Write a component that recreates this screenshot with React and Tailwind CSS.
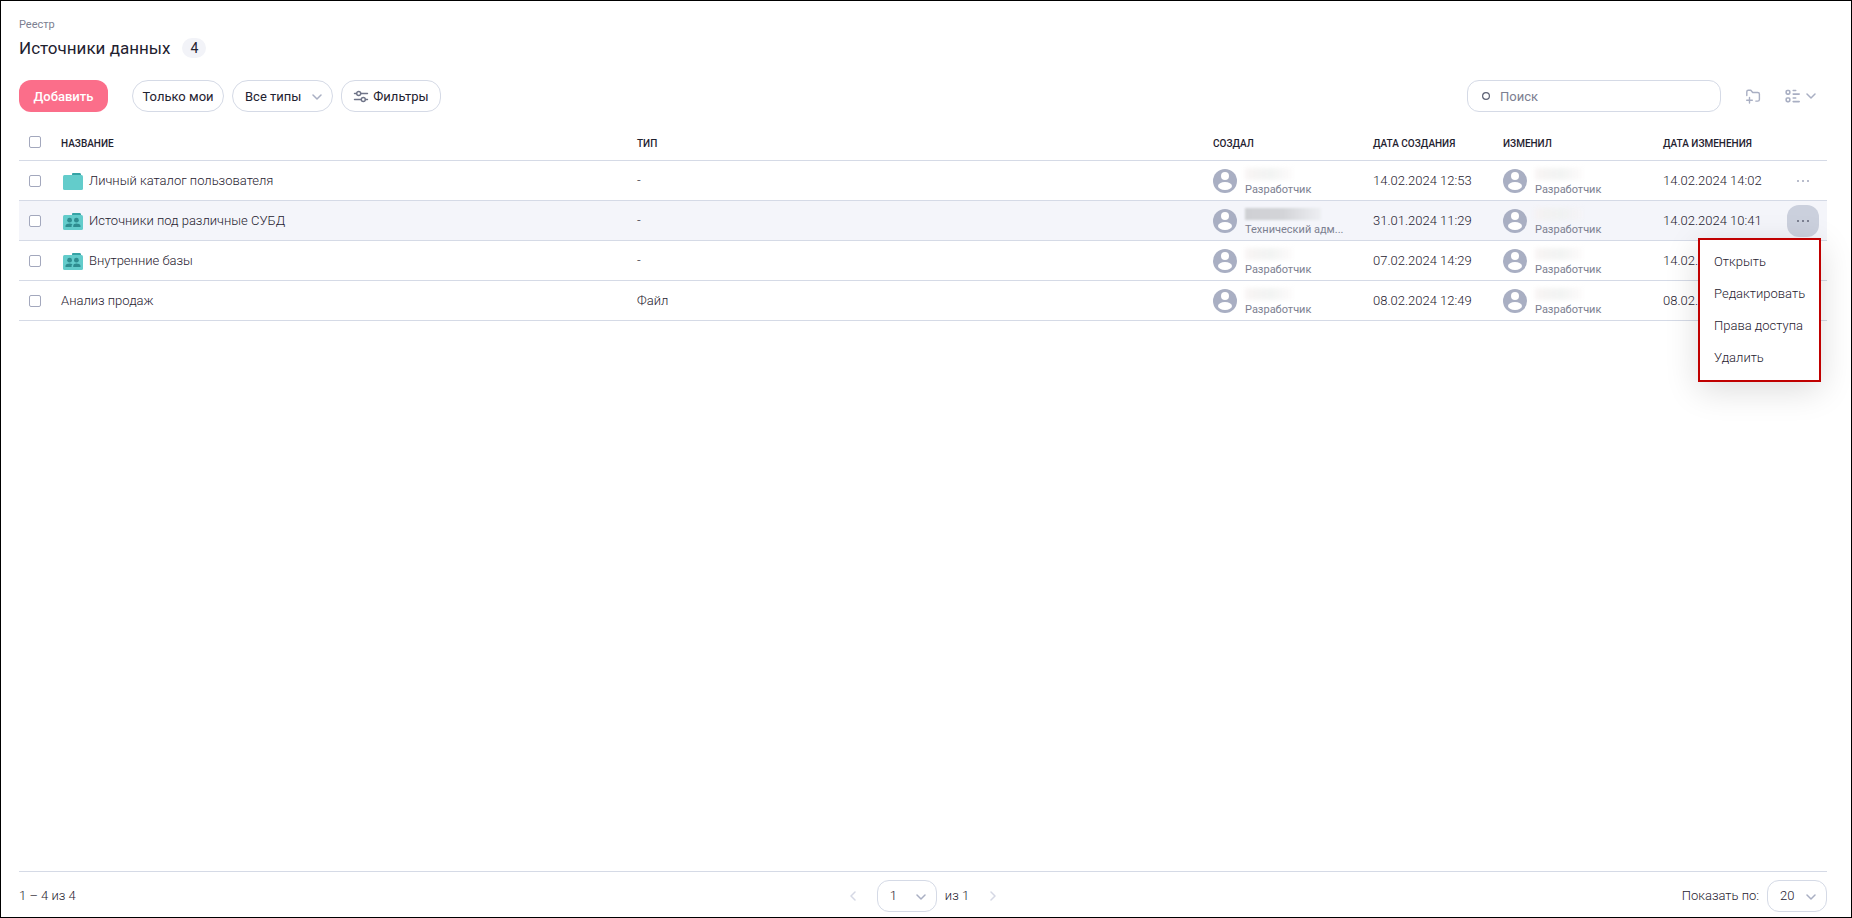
import React, { useState } from "react";

const initialSources = [
  {
    id: 1,
    name: "Личный каталог пользователя",
    kind: "folder",
    type: "-",
    createdBy: "Разработчик",
    createdAt: "14.02.2024 12:53",
    updatedBy: "Разработчик",
    updatedAt: "14.02.2024 14:02",
  },
  {
    id: 2,
    name: "Источники под различные СУБД",
    kind: "shared",
    type: "-",
    createdBy: "Технический адм...",
    darkName: true,
    createdAt: "31.01.2024 11:29",
    updatedBy: "Разработчик",
    updatedAt: "14.02.2024 10:41",
  },
  {
    id: 3,
    name: "Внутренние базы",
    kind: "shared",
    type: "-",
    createdBy: "Разработчик",
    createdAt: "07.02.2024 14:29",
    updatedBy: "Разработчик",
    updatedAt: "14.02.2024 10:40",
  },
  {
    id: 4,
    name: "Анализ продаж",
    kind: "source",
    type: "Файл",
    createdBy: "Разработчик",
    createdAt: "08.02.2024 12:49",
    updatedBy: "Разработчик",
    updatedAt: "08.02.2024 12:49",
  },
];

const menuItems = ["Открыть", "Редактировать", "Права доступа", "Удалить"];

const Chevron = ({ className }) => (
  <svg
    viewBox="0 0 10 6"
    className={className}
    fill="none"
    stroke="currentColor"
    strokeWidth="1.5"
    strokeLinecap="round"
    strokeLinejoin="round"
  >
    <path d="M1 1l4 4 4-4" />
  </svg>
);

const FolderIcon = ({ shared }) => (
  <svg width="20" height="17" viewBox="0 0 20 17" className="shrink-0">
    <path d="M9 2.5V1.2C9 .5 9.500 0 10.200 0h6.300c.8 0 1.500.6 1.500 1.400V3H9z" fill="#35a3a5" />
    <rect y="2" width="20" height="15" rx="1.5" fill="#63cccb" />
    {shared && (
      <g fill="#2f8d90">
        <circle cx="6.6" cy="7.2" r="2.4" />
        <circle cx="13.4" cy="7.2" r="2.4" />
        <path d="M2.500 14v-1.200c0-1.400 2.400-2.200 4.100-2.200 1 0 2.100.2 2.900.7-.8.5-.9 1-.9 1.700v1z" />
        <path d="M10.200 14v-1c0-1.600 1.600-2.400 3.200-2.400 1.700 0 4.100.8 4.100 2.200V14z" />
      </g>
    )}
  </svg>
);

const Avatar = () => (
  <svg width="24" height="24" viewBox="0 0 24 24" className="shrink-0">
    <circle cx="12" cy="12" r="12" fill="#a9afc3" />
    <circle cx="12" cy="7" r="4" fill="#fff" />
    <ellipse cx="12" cy="17" rx="7" ry="4" fill="#fff" />
  </svg>
);

const Dots = () => (
  <svg width="12" height="2" viewBox="0 0 12 2" fill="currentColor">
    <rect width="2" height="2" />
    <rect x="5" width="2" height="2" />
    <rect x="10" width="2" height="2" />
  </svg>
);

const Person = ({ role, dark }) => (
  <div className="flex items-center gap-2">
    <Avatar />
    <div className="whitespace-nowrap">
      {/* hidden user name */}
      {dark ? (
        <div className="mb-0.5 mt-1 h-3 w-[76px] bg-linear-to-r from-[#cfd0d4] via-[#d3d4d8] to-[#eeeff3] blur-[1px]" />
      ) : (
        <div className="mb-0.5 mt-1 h-3 w-12 bg-linear-to-r from-[#f6f1f0]/70 via-[#eef0ef]/80 to-[#faf4f4]/30 blur-[2px]" />
      )}
      <div className="text-[11px] leading-4 text-[#7c8091]">{role}</div>
    </div>
  </div>
);

const Checkbox = ({ label, ...props }) => (
  <input
    type="checkbox"
    aria-label={label}
    className="ml-[10px] block size-3 appearance-none rounded-[2px] border border-[#a3a8bd] bg-white checked:bg-[#a3a8bd]"
    {...props}
  />
);

const App = () => {
  const [search, setSearch] = useState("");
  const [selected, setSelected] = useState([]);
  const [openMenu, setOpenMenu] = useState(2);

  const sources = initialSources.filter((s) =>
    s.name.toLowerCase().includes(search.toLowerCase())
  );

  const toggleRow = (id) => {
    setSelected((prev) =>
      prev.includes(id) ? prev.filter((x) => x !== id) : [...prev, id]
    );
  };

  const toggleAll = () => {
    setSelected(selected.length === sources.length ? [] : sources.map((s) => s.id));
  };

  return (
    <div className="flex min-h-screen flex-col border border-black bg-white pl-[18px] pr-6 font-['Roboto',sans-serif] text-[13px] text-[#1f2230]">
      {/* Header */}
      <header className="pt-4">
        <a href="#" className="block w-fit text-[11px] leading-4 text-[#7c8091]">
          Реестр
        </a>
        <div className="mt-[3px] flex items-center gap-3">
          <h1 className="text-[17px] leading-6">Источники данных</h1>
          <span className="flex h-5 w-6 items-center justify-center rounded-full bg-[#f2f3f8] text-sm">
            4
          </span>
        </div>
      </header>

      {/* Toolbar */}
      <div className="mt-5 flex items-center gap-2">
        <button className="mr-4 h-8 w-[89px] rounded-xl bg-[#fb6e8a] pt-0.5 font-medium text-white">
          Добавить
        </button>
        <button className="h-8 w-[92px] rounded-full border border-[#d5dae6] pt-0.5">
          Только мои
        </button>
        <div className="relative">
          <select
            aria-label="Тип"
            className="block h-8 w-[101px] appearance-none rounded-full border border-[#d5dae6] bg-white pl-3 pt-0.5"
          >
            <option>Все типы</option>
          </select>
          <Chevron className="pointer-events-none absolute right-[11px] top-3.5 w-[10px] text-[#a9afc3]" />
        </div>
        <button className="flex h-8 w-[100px] items-center justify-center gap-1 rounded-[14px] border border-[#d5dae6] pt-0.5">
          <svg
            width="16"
            height="14"
            viewBox="0 0 16 14"
            fill="none"
            stroke="#6f7488"
            strokeWidth="1.4"
            strokeLinecap="round"
          >
            <path d="M1.500 3.500h2M8 3.500h6.500M1.500 9.500H8M12.500 9.500h2" />
            <circle cx="5.700" cy="3.500" r="2" />
            <circle cx="10.300" cy="9.500" r="2" />
          </svg>
          Фильтры
        </button>

        <label className="relative ml-auto">
          <svg
            width="8"
            height="8"
            viewBox="0 0 8 8"
            className="absolute left-[15px] top-3"
            fill="none"
            stroke="#5d6275"
            strokeWidth="1.2"
          >
            <circle cx="4" cy="4" r="3.4" />
          </svg>
          <input
            type="text"
            aria-label="Поиск"
            placeholder="Поиск"
            value={search}
            onChange={(e) => setSearch(e.target.value)}
            className="block h-8 w-[254px] rounded-xl border border-[#d5dae6] pl-8 pr-3 placeholder:text-[#7c8091]"
          />
        </label>
        <button
          aria-label="Новая папка"
          className="ml-2 flex size-8 items-center justify-center text-[#a9afc3]"
        >
          <svg
            width="16"
            height="16"
            viewBox="0 0 16 16"
            fill="none"
            stroke="currentColor"
            strokeWidth="1.4"
            strokeLinecap="round"
            strokeLinejoin="round"
          >
            <path d="M1.800 7.500V3.800c0-1 .6-1.600 1.500-1.600h2.500l1.900 2.300h5c1.100 0 1.700.6 1.700 1.600v5.400c0 1-.6 1.600-1.700 1.600h-1.900" />
            <path d="M4.500 9.500v5.500M1.700 12.300h5.600" />
          </svg>
        </button>
        <button
          aria-label="Вид"
          className="flex h-8 w-[50px] items-center gap-1.5 pl-2 text-[#a9afc3]"
        >
          <svg
            width="15"
            height="14"
            viewBox="0 0 15 14"
            fill="none"
            stroke="currentColor"
            strokeWidth="1.6"
            strokeLinecap="round"
          >
            <rect x="1.200" y="1.500" width="3.600" height="3.600" rx="1" />
            <rect x="1.200" y="9" width="3.600" height="3.600" rx="1" />
            <path d="M8.200 1.500h2.500M8.200 5.100h6M8.200 9h2.500M8.200 12.600h6" />
          </svg>
          <Chevron className="w-[10px]" />
        </button>
      </div>

      {/* Sources table */}
      <table className="mt-2 w-full table-fixed text-left">
        <colgroup>
          <col className="w-[42px]" />
          <col />
          <col />
          <col className="w-[160px]" />
          <col className="w-[130px]" />
          <col className="w-[160px]" />
          <col className="w-[120px]" />
          <col className="w-11" />
        </colgroup>
        <thead className="text-[10px] uppercase">
          <tr className="h-10 border-b border-[#d5dae6]">
            <th className="pt-1">
              <Checkbox
                label="Выбрать все"
                checked={sources.length > 0 && selected.length === sources.length}
                onChange={toggleAll}
              />
            </th>
            <th className="pt-2 font-medium">Название</th>
            <th className="pt-2 font-medium">Тип</th>
            <th className="pt-2 font-medium">Создал</th>
            <th className="pt-2 font-medium">Дата создания</th>
            <th className="pt-2 font-medium">Изменил</th>
            <th className="pt-2 font-medium">Дата изменения</th>
            <th></th>
          </tr>
        </thead>
        <tbody className="font-light">
          {sources.map((source) => (
            <tr
              key={source.id}
              className={`h-10 border-b border-[#d5dae6] ${
                openMenu === source.id ? "bg-[#f4f5fa]" : ""
              }`}
            >
              <td className="pt-0.5">
                <Checkbox
                  label={source.name}
                  checked={selected.includes(source.id)}
                  onChange={() => toggleRow(source.id)}
                />
              </td>
              <td className="pt-0.5">
                <a href="#" className="flex items-center gap-1.5">
                  {source.kind !== "source" && (
                    <span className="pl-0.5">
                      <FolderIcon shared={source.kind === "shared"} />
                    </span>
                  )}
                  {source.name}
                </a>
              </td>
              <td className="pt-0.5">{source.type}</td>
              <td className="pt-0.5 font-normal">
                <Person role={source.createdBy} dark={source.darkName} />
              </td>
              <td className="pt-0.5">{source.createdAt}</td>
              <td className="pt-0.5 font-normal">
                <Person role={source.updatedBy} />
              </td>
              <td className="pt-0.5">{source.updatedAt}</td>
              <td className="pt-0.5">
                <div className="relative ml-1 w-8">
                  <button
                    aria-label="Действия"
                    onClick={() => setOpenMenu(openMenu === source.id ? null : source.id)}
                    className={`flex size-8 items-center justify-center rounded-xl ${
                      openMenu === source.id
                        ? "bg-[#cbd0dd] text-[#7c8091]"
                        : "text-[#b9bdcc]"
                    }`}
                  >
                    <Dots />
                  </button>
                  {openMenu === source.id && (
                    <ul className="absolute -right-0.5 top-full z-10 mt-px w-[123px] border-2 border-[#c00000] bg-white py-1.5 shadow-[0_8px_32px_rgba(0,0,0,0.14)]">
                      {menuItems.map((item) => (
                        <li key={item}>
                          <button className="h-8 w-full whitespace-nowrap pl-3.5 text-left">
                            {item}
                          </button>
                        </li>
                      ))}
                    </ul>
                  )}
                </div>
              </td>
            </tr>
          ))}
        </tbody>
      </table>

      {/* Pagination */}
      <footer className="mt-auto grid grid-cols-3 items-center border-t border-[#d5dae6] pb-[5px] pt-2 font-light">
        <span>1 – 4 из 4</span>
        <div className="flex items-center justify-center">
          <button aria-label="Назад" className="flex size-6 items-center justify-center">
            <Chevron className="w-[10px] rotate-90 text-[#d5d8e4]" />
          </button>
          <div className="relative ml-3 mr-2">
            <select
              aria-label="Страница"
              className="block h-8 w-[60px] appearance-none rounded-xl border border-[#d5dae6] bg-white pl-3"
            >
              <option>1</option>
            </select>
            <Chevron className="pointer-events-none absolute right-[11px] top-3.5 w-[10px] text-[#a9afc3]" />
          </div>
          <span>из 1</span>
          <button aria-label="Вперёд" className="ml-3 flex size-6 items-center justify-center">
            <Chevron className="w-[10px] -rotate-90 text-[#d5d8e4]" />
          </button>
        </div>
        <div className="flex items-center justify-end gap-2">
          <label htmlFor="pageSize">Показать по:</label>
          <div className="relative">
            <select
              id="pageSize"
              className="block h-8 w-[60px] appearance-none rounded-xl border border-[#d5dae6] bg-white pl-3"
            >
              <option>20</option>
            </select>
            <Chevron className="pointer-events-none absolute right-[11px] top-3.5 w-[10px] text-[#a9afc3]" />
          </div>
        </div>
      </footer>
    </div>
  );
};

export default App;
